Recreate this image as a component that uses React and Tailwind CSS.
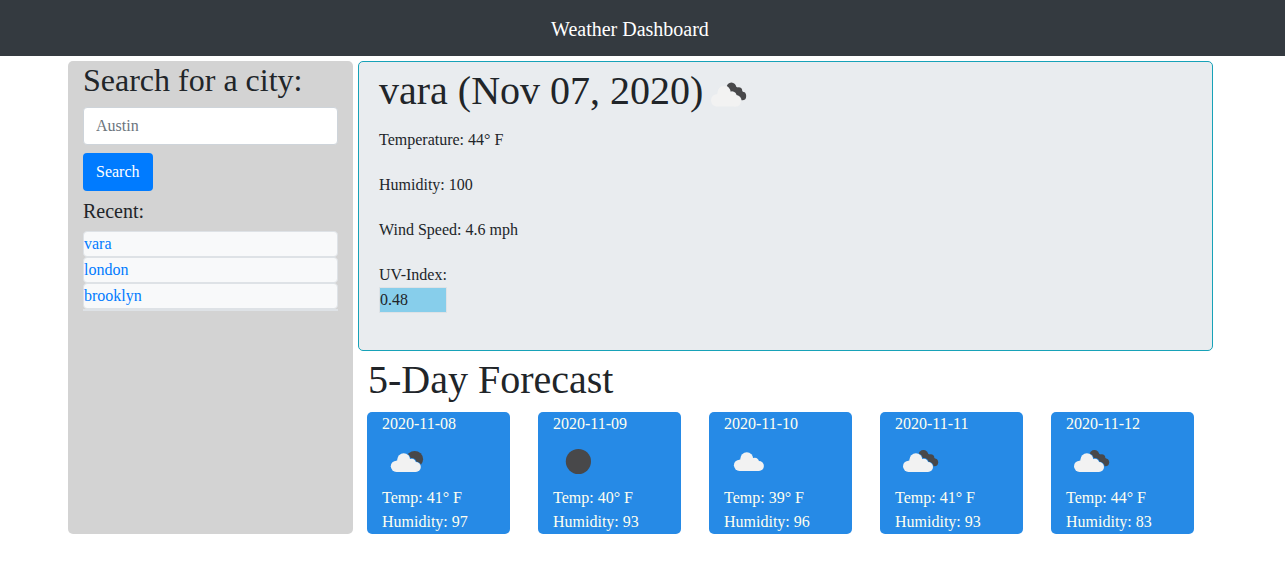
const Cloud = () => (
  <g fill="#f2f2f2">
    <circle cx="13.6" cy="30.3" r="5.6" />
    <circle cx="20.9" cy="23.8" r="6.5" />
    <circle cx="28.9" cy="26.9" r="4.2" />
    <circle cx="33" cy="31" r="5" />
    <path d="M13.6 24.8 20 22 29 25 33 29V36H13.6Z" />
  </g>
);

const CloudGap = ({ color }) => (
  <g fill={color}>
    <circle cx="20.9" cy="23.8" r="7.1" />
    <circle cx="29" cy="26.8" r="4.8" />
    <circle cx="33" cy="31" r="5.6" />
  </g>
);

function WeatherIcon({ kind, gap = "#268ae6", className = "h-[50px]" }) {
  return (
    <svg viewBox="0 0 50 50" preserveAspectRatio="none" className={"block w-[50px] shrink-0 " + className}>
      {kind === "moon" && <circle cx="25.4" cy="25.5" r="12.6" fill="#48484a" />}
      {kind === "cloud" && (
        <g transform="translate(1.9 -1)">
          <Cloud />
        </g>
      )}
      {kind === "few" && (
        <g transform="translate(.8 0)">
          <circle cx="31.9" cy="23.3" r="8.4" fill="#48484a" />
          <CloudGap color={gap} />
          <Cloud />
        </g>
      )}
      {kind === "broken" && (
        <>
          <g fill="#48484a">
            <circle cx="28.4" cy="18.9" r="4.9" />
            <circle cx="35.6" cy="22" r="3.7" />
            <circle cx="39.3" cy="26.3" r="3.9" />
            <path d="M26 21 32 17 42 24 39 30.2 34 29 27 26Z" />
          </g>
          <CloudGap color={gap} />
          <Cloud />
        </>
      )}
    </svg>
  );
}

const recent = ["vara", "london", "brooklyn"];

const forecast = [
  { date: "2020-11-08", icon: "few", temp: 41, humidity: 97 },
  { date: "2020-11-09", icon: "moon", temp: 40, humidity: 93 },
  { date: "2020-11-10", icon: "cloud", temp: 39, humidity: 96 },
  { date: "2020-11-11", icon: "broken", temp: 41, humidity: 93 },
  { date: "2020-11-12", icon: "broken", temp: 44, humidity: 83 },
];

export default function App() {
  return (
    <div className="h-[564px] overflow-hidden bg-white font-['Liberation_Serif','Times_New_Roman',serif] text-base leading-6 text-[#212529]">
      <header className="flex h-14 items-center justify-center bg-[#343a40] pr-[25px] pt-0.5 text-xl text-white">
        Weather Dashboard
      </header>
      <main className="flex gap-[5px] pl-[68px] pt-[5px]">
        <aside className="h-[473px] w-[285px] rounded-[5px] bg-[#d3d3d3] px-[15px]">
          <h2 className="mb-2 text-[32px] leading-[38.4px]">Search for a city:</h2>
          <input
            placeholder="Austin"
            className="block h-[38px] w-full rounded border border-[#ced4da] bg-white px-3 placeholder:text-[#6c757d]"
          />
          <button className="mt-2 block h-[38px] rounded bg-[#007bff] px-[13px] text-white">Search</button>
          <h5 className="mb-2 mt-2 text-xl leading-6">Recent:</h5>
          <ul className="border-b-2 border-[#dee2e6]">
            {recent.map((city) => (
              <li key={city} className="rounded border border-[#dee2e6] bg-[#f8f9fa] text-[#007bff]">
                {city}
              </li>
            ))}
          </ul>
        </aside>
        <div className="w-[855px]">
          <section className="h-[290px] rounded-[5px] border border-[#17a2b8] bg-[#e9ecef] pl-5 pt-[5px]">
            <h1 className="flex h-[61px] text-[40px] leading-[48px]">
              <span className="w-[324px] whitespace-nowrap">vara (Nov 07, 2020)</span>
              <WeatherIcon kind="broken" gap="#e9ecef" className="h-[55px]" />
            </h1>
            <p className="mb-[21px]">Temperature: 44° F</p>
            <p className="mb-[21px]">Humidity: 100</p>
            <p className="mb-[21px]">Wind Speed: 4.6 mph</p>
            <p>UV-Index:</p>
            <p className="w-[68px] border border-[#dee2e6] bg-[#87ceeb]">0.48</p>
          </section>
          <h1 className="mb-2 ml-2.5 mt-[5px] text-[40px] leading-[48px]">5-Day Forecast</h1>
          <div className="ml-[9px] flex gap-7">
            {forecast.map((day) => (
              <article key={day.date} className="h-[122px] w-[143px] rounded-[5px] bg-[#268ae6] pl-[15px] text-[#fffff0]">
                <p>{day.date}</p>
                <WeatherIcon kind={day.icon} />
                <p>Temp: {day.temp}° F</p>
                <p>Humidity: {day.humidity}</p>
              </article>
            ))}
          </div>
        </div>
      </main>
    </div>
  );
}
